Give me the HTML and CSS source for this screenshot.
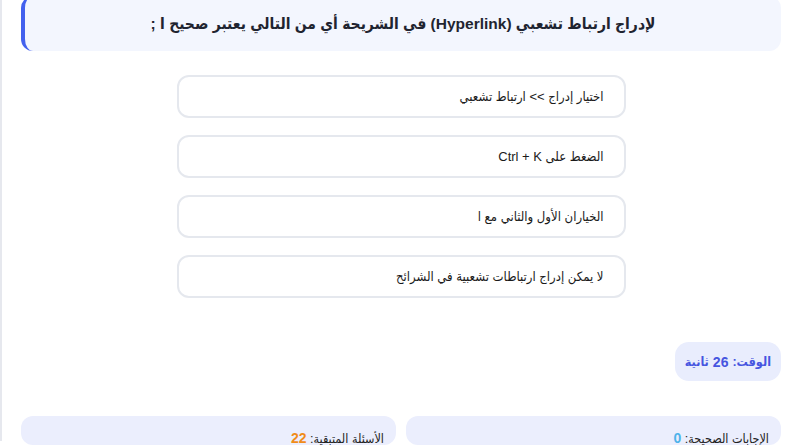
FILE: index.html
```html
<!DOCTYPE html>
<html lang="ar" dir="rtl">
<head>
<meta charset="utf-8">
<link rel="stylesheet" href="styles.css">
</head>
<body>
<div class="page">
  <div class="question">لإدراج ارتباط تشعبي (Hyperlink) في الشريحة أي من التالي يعتبر صحيح ا ;</div>
  <div class="options">
    <div class="option">اختيار إدراج &gt;&gt; ارتباط تشعبي</div>
    <div class="option">الضغط على Ctrl + K</div>
    <div class="option">الخياران الأول والثاني مع ا</div>
    <div class="option">لا يمكن إدراج ارتباطات تشعبية في الشرائح</div>
  </div>
  <div class="timer-row">
    <div class="timer">الوقت: <b>26</b> ثانية</div>
  </div>
  <div class="stats">
    <div class="stat">الإجابات الصحيحة: <b class="correct">0</b></div>
    <div class="stat">الأسئلة المتبقية: <b class="remaining">22</b></div>
  </div>
</div>
</body>
</html>
```

FILE: styles.css
```css
html, body {
  margin: 0;
  padding: 0;
  background: #ffffff;
}
body {
  font-family: "Liberation Sans", "DejaVu Sans Condensed", "DejaVu Sans", sans-serif;
  color: #222;
  overflow: hidden;
  height: 445px;
}
.page {
  border-left: 2px solid #e6e8ee;
  padding: 0 14px 0 19px;
  height: 445px;
  box-sizing: border-box;
}
.question {
  margin-top: -4px;
  background: #f3f6fe;
  border-left: 4px solid #4361ee;
  border-radius: 12px;
  height: 55px;
  display: flex;
  align-items: center;
  justify-content: center;
  font-weight: bold;
  font-size: 15.5px;
  color: #1f2430;
}
.options {
  width: 449px;
  margin: 24px auto 0;
  display: flex;
  flex-direction: column;
  gap: 17px;
}
.option {
  box-sizing: border-box;
  height: 43px;
  border: 2px solid #e5e8ee;
  border-radius: 12px;
  padding: 0 20px;
  display: flex;
  align-items: center;
  font-size: 13px;
  color: #1a1a1a;
  background: #fff;
}
.timer-row {
  display: flex;
  margin-top: 44px;
}
.timer {
  background: #e9edfd;
  color: #4655e0;
  border-radius: 14px;
  height: 39px;
  padding: 0 10px;
  display: flex;
  align-items: center;
  gap: 4px;
  font-size: 12.5px;
  font-weight: bold;
}
.timer b { font-weight: bold; font-size: 14px; }
.stats {
  margin-top: 35px;
  display: grid;
  grid-template-columns: 1fr 1fr;
  gap: 10px;
}
.stat {
  background: #ebeefd;
  border-radius: 12px;
  height: 29px;
  padding: 14px 12px 0;
  box-sizing: border-box;
  font-size: 12.5px;
  color: #222;
  overflow: hidden;
  white-space: nowrap;
}
.stat b { font-size: 14px; }
.correct { color: #4fb3ea; }
.remaining { color: #f08c1a; }
```
